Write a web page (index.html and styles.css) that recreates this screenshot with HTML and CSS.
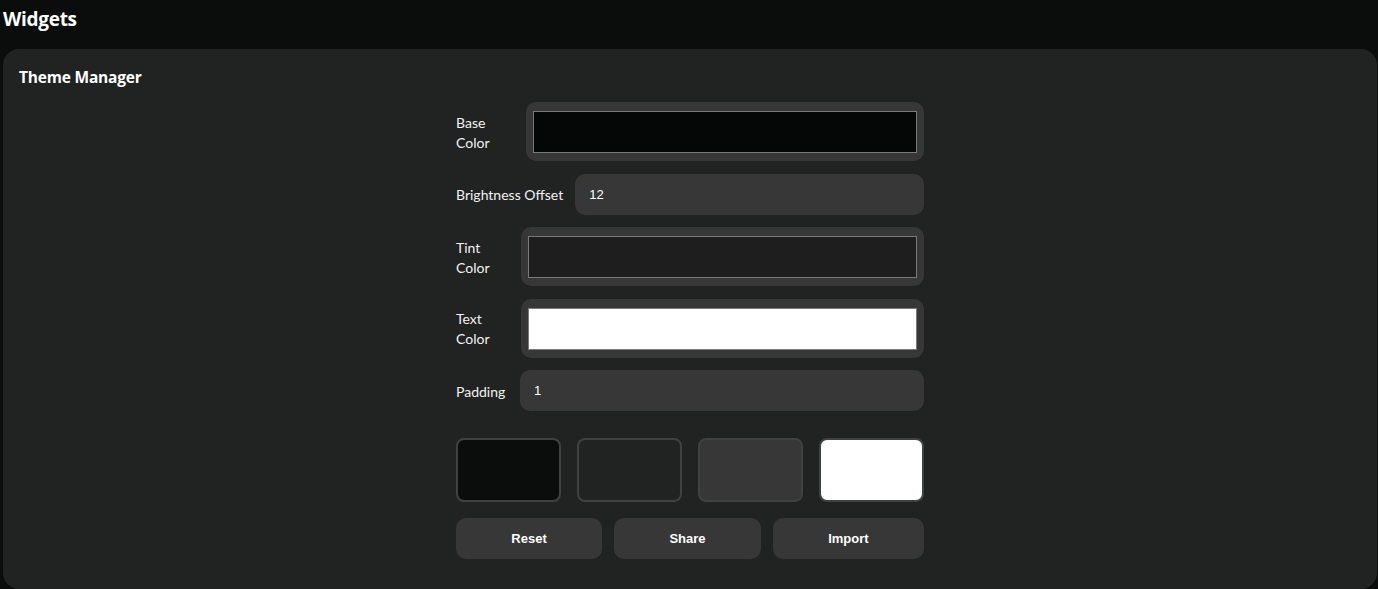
FILE: index.html
```html
<!DOCTYPE html>
<html>
<head>
<meta charset="utf-8">
<link rel="stylesheet" href="styles.css">
</head>
<body>
<h1 class="page-title">Widgets</h1>
<section class="card">
  <h2 class="card-title">Theme Manager</h2>
  <div class="form">
    <div class="row">
      <label class="label label-base">Base Color</label>
      <div class="color-wrap"><div class="color-box box-base"></div></div>
    </div>
    <div class="row">
      <label class="label">Brightness Offset</label>
      <div class="text-input">12</div>
    </div>
    <div class="row">
      <label class="label label-color">Tint Color</label>
      <div class="color-wrap"><div class="color-box box-tint"></div></div>
    </div>
    <div class="row">
      <label class="label label-color">Text Color</label>
      <div class="color-wrap"><div class="color-box box-text"></div></div>
    </div>
    <div class="row">
      <label class="label label-pad">Padding</label>
      <div class="text-input">1</div>
    </div>
    <div class="swatches">
      <div class="swatch sw1"></div>
      <div class="swatch sw2"></div>
      <div class="swatch sw3"></div>
      <div class="swatch sw4"></div>
    </div>
    <div class="buttons">
      <button class="btn">Reset</button>
      <button class="btn">Share</button>
      <button class="btn">Import</button>
    </div>
  </div>
</section>
</body>
</html>
```
FILE: styles.css
```css
html, body {
  margin: 0;
  padding: 0;
  background: #0b0c0c;
  color: #ffffff;
  height: 589px;
  overflow: hidden;
}
body {
  font-family: "Lato", "Open Sans", sans-serif;
}
.page-title {
  margin: 0;
  padding: 7px 3px 0 3px;
  height: 49px;
  box-sizing: border-box;
  font-family: "Open Sans", sans-serif;
  font-size: 19px;
  font-weight: 700;
  line-height: 25px;
  letter-spacing: -0.3px;
}
.card {
  margin: 0 1px 0 3px;
  background: #212222;
  border-radius: 16px;
  height: 540px;
  box-sizing: border-box;
  padding: 16px 16px;
}
.card-title {
  margin: 0;
  font-family: "Open Sans", sans-serif;
  font-size: 15.5px;
  font-weight: 700;
  line-height: 24px;
  letter-spacing: -0.2px;
}
.form {
  width: 468px;
  margin: 13px auto 0;
  display: flex;
  flex-direction: column;
}
.row {
  display: flex;
  align-items: center;
  gap: 12px;
  margin-bottom: 12.5px;
}
.label {
  font-size: 14px;
  line-height: 20px;
  padding-top: 2px;
  color: #f2f2f2;
  white-space: nowrap;
  flex: none;
}
.label-base {
  width: 58px;
  white-space: normal;
}
.label-color {
  width: 53px;
  white-space: normal;
}
.label-pad {
  width: 52px;
}
.color-wrap {
  flex: 1;
  background: #363736;
  border-radius: 10px;
  padding: 9px 7px 8px 7px;
  height: 59px;
  box-sizing: border-box;
}
.color-box {
  height: 100%;
  border: 1px solid #7a7a7a;
  box-sizing: border-box;
}
.box-base { background: #050706; }
.box-tint { background: #1e1e1e; }
.box-text { background: #ffffff; }
.text-input {
  flex: 1;
  height: 41px;
  background: #363736;
  border-radius: 10px;
  padding: 0 14px;
  display: flex;
  align-items: center;
  font-family: "Liberation Sans", Arial, sans-serif;
  font-size: 13px;
  color: #ffffff;
}
.swatches {
  display: flex;
  gap: 16px;
  margin-top: 14px;
}
.swatch {
  flex: 1;
  height: 64px;
  border: 2px solid #404141;
  border-radius: 8px;
  box-sizing: border-box;
}
.sw1 { background: #0b0c0c; }
.sw2 { background: #212222; }
.sw3 { background: #363736; }
.sw4 { background: #ffffff; }
.buttons {
  display: flex;
  gap: 12px;
  margin-top: 16px;
}
.btn {
  flex: 1 1 auto;
  height: 41px;
  border: none;
  border-radius: 10px;
  background: #363736;
  color: #ffffff;
  font-family: "Liberation Sans", Arial, sans-serif;
  font-size: 13px;
  font-weight: 700;
  padding: 0 12px;
}
```
